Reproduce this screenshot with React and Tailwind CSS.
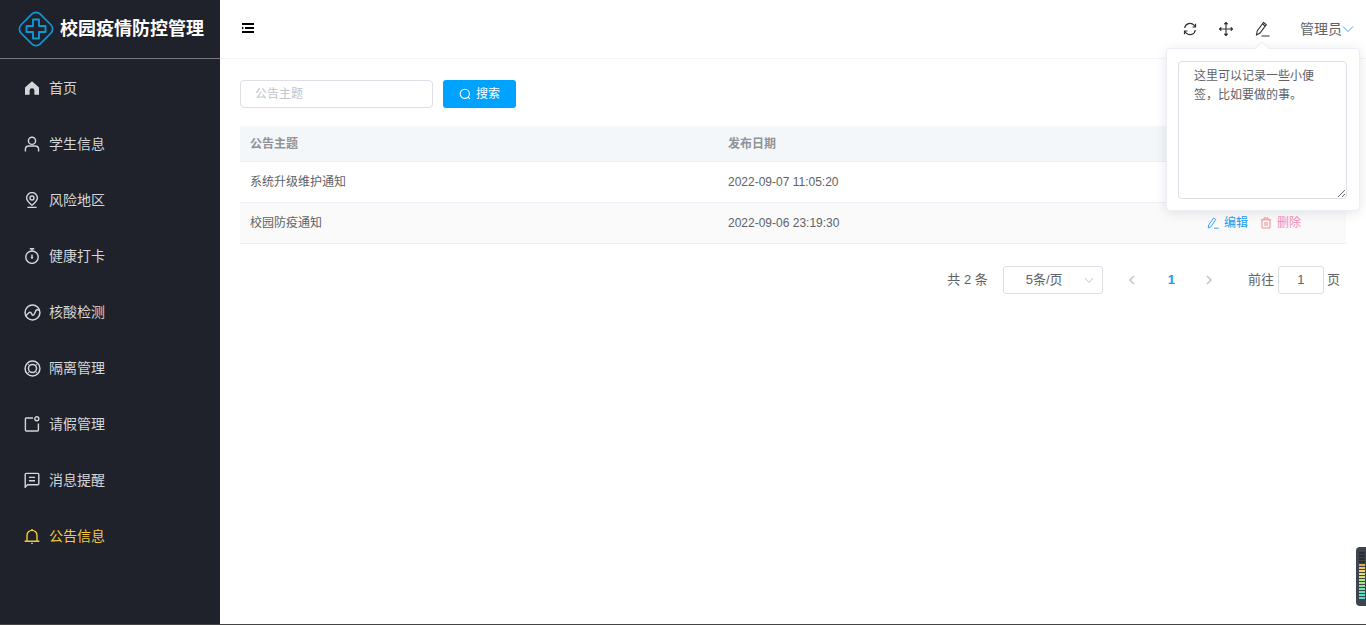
const font = { fontFamily: '"Liberation Sans", "Noto Sans CJK SC", sans-serif' };

const iconProps = { width: 16, height: 16, viewBox: '0 0 16 16', fill: 'none', stroke: 'currentColor', strokeWidth: 1.4 };

const icons = {
  home: (
    <svg width="16" height="16" viewBox="0 0 16 16" fill="currentColor">
      <path d="M8 1.2 15 7.600V14.800H10.400V10.600a2.400 2.400 0 0 0-4.800 0v4.200H1V7.600z" />
    </svg>
  ),
  user: (
    <svg {...iconProps}>
      <circle cx="8" cy="4.800" r="3.600" />
      <path d="M1.400 15.500v-2.100A3.400 3.400 0 0 1 4.800 10h6.400a3.400 3.400 0 0 1 3.400 3.400v2.100" />
    </svg>
  ),
  pin: (
    <svg {...iconProps}>
      <path d="M8 13.200C5 10.800 2.600 8.600 2.600 6a5.400 5.400 0 0 1 10.800 0c0 2.600-2.400 4.800-5.400 7.200z" />
      <circle cx="8" cy="6" r="2" />
      <path d="M3.400 15.400h9.200" />
    </svg>
  ),
  timer: (
    <svg {...iconProps}>
      <circle cx="8" cy="9.200" r="6.200" />
      <path d="M5.800.8h4.400M8 1v2M8 6.400v3.200" />
      <circle cx="8" cy="9.600" r=".5" fill="currentColor" />
    </svg>
  ),
  chart: (
    <svg {...iconProps} width="17" height="17" viewBox="0 0 16 16">
      <circle cx="8" cy="8" r="7" />
      <path d="M1.400 10.800c1.800 0 2.400-3 4.200-3s1.400 2.800 3 2.800c1.800 0 1.600-4.600 3.400-5.200.8-.2 1.800.2 2.800.8" />
    </svg>
  ),
  help: (
    <svg {...iconProps} width="17" height="17" viewBox="0 0 16 16">
      <circle cx="8" cy="8" r="7" />
      <circle cx="8" cy="8" r="3.800" />
      <path d="M5.200 5.200 3 3M10.800 5.200 13 3M5.200 10.800 3 13M10.800 10.800 13 13" strokeWidth=".8" />
    </svg>
  ),
  note: (
    <svg {...iconProps}>
      <path d="M9 2H2.400a1 1 0 0 0-1 1v11a1 1 0 0 0 1 1h11a1 1 0 0 0 1-1V7.400" />
      <circle cx="12.800" cy="2.800" r="2" />
    </svg>
  ),
  message: (
    <svg {...iconProps}>
      <path d="M1.200 15.200V2.400a1 1 0 0 1 1-1h11.600a1 1 0 0 1 1 1v9.400a1 1 0 0 1-1 1H3.600z" />
      <path d="M5 5.400h6M5 8.800h6" />
    </svg>
  ),
  bell: (
    <svg {...iconProps}>
      <path d="M3 13V7.400a5 5 0 0 1 10 0V13" />
      <path d="M.6 13.200h14.800M8 1v1.400" />
      <path d="M7.200 15.400h1.600" />
    </svg>
  ),
};

const menu = [
  ['首页', 'home'],
  ['学生信息', 'user'],
  ['风险地区', 'pin'],
  ['健康打卡', 'timer'],
  ['核酸检测', 'chart'],
  ['隔离管理', 'help'],
  ['请假管理', 'note'],
  ['消息提醒', 'message'],
  ['公告信息', 'bell'],
];

const rows = [
  ['系统升级维护通知', '2022-09-07 11:05:20'],
  ['校园防疫通知', '2022-09-06 23:19:30'],
];

function Logo() {
  return (
    <svg width="38" height="38" viewBox="0 0 38 38" fill="none" stroke="#0e97d6" strokeWidth="1.700">
      <rect x="5.500" y="5.500" width="27" height="27" rx="6" transform="rotate(45 19 19)" />
      <path d="M16 9.500h6V16h6.500v6H22v6.500h-6V22H9.500v-6H16z" strokeWidth="1.900" strokeLinejoin="round" />
    </svg>
  );
}

function Sidebar() {
  return (
    <aside className="w-[220px] shrink-0 bg-[#1f222b] flex flex-col">
      <div className="h-[59px] border-b border-[#75777c] flex items-center pl-[17px] gap-[5px]">
        <Logo />
        <span className="text-[18px] font-bold text-white leading-none">校园疫情防控管理</span>
      </div>
      <nav className="pt-px">
        {menu.map(([label, icon]) => (
          <div
            key={label}
            className={`h-14 flex items-center pl-6 text-[14px] ${label === '公告信息' ? 'text-[#f5c73d]' : 'text-[#d4d6da]'}`}
          >
            <span className="w-[25px] shrink-0">{icons[icon]}</span>
            <span>{label}</span>
          </div>
        ))}
      </nav>
    </aside>
  );
}

function Header() {
  return (
    <header className="h-[59px] shrink-0 border-b border-[#f3f4f6] flex items-center pl-[22px] pr-[12px] relative">
      <svg width="12" height="10" viewBox="0 0 12 10" className="text-black -mt-[2px]" fill="currentColor">
        <path d="M0 0h12v2H0zM3 4h9v2H3zM0 8h12v2H0zM0 3.500 2 5 0 6.500z" />
      </svg>
      <div className="ml-auto flex items-center text-[#303133]">
        <svg width="14" height="14" viewBox="0 0 14 14" fill="none" stroke="currentColor" strokeWidth="1.200">
          <path d="M1.700 6A5.300 5.300 0 0 1 11 3.200L12.300 4.800M12.300 8A5.300 5.300 0 0 1 3 10.800L1.700 9.200" />
          <path d="M12.500 1.800v3.200H9.500M1.500 12.200V9h3" />
        </svg>
        <svg className="ml-[22px]" width="14" height="14" viewBox="0 0 14 14" fill="none" stroke="currentColor" strokeWidth="1.100">
          <path d="M7 .5v13M.5 7h13" />
          <path d="M5.300 2.200 7 .5l1.700 1.700M5.300 11.800 7 13.500l1.700-1.700M2.200 5.300.5 7l1.700 1.700M11.800 5.300 13.500 7l-1.700 1.700" fill="currentColor" />
        </svg>
        <svg className="ml-[22px]" width="15" height="16" viewBox="0 0 15 16" fill="none" stroke="currentColor" strokeWidth="1.100">
          <path d="M1.500 14 2.200 10 8.500 1.500l2.800 2L5 12z" />
          <path d="M7.500 3l2.800 2M6.500 15h8" />
        </svg>
        <span className="ml-[30px] text-[14px] text-[#606266]">管理员</span>
        <svg width="12" height="12" viewBox="0 0 12 12" fill="none" stroke="#409eff" strokeWidth="1">
          <path d="M1 3.500 6 8.500l5-5" />
        </svg>
      </div>

      <div className="absolute left-[946px] top-[48px] w-[194px] h-[163px] bg-white rounded-[4px] border border-[#ebeef5] shadow-[0_2px_12px_rgba(0,0,0,0.1)] pl-[11px] pt-3 z-10">
        <span className="absolute -top-[6px] left-[90px] w-[10px] h-[10px] rotate-45 bg-white border-l border-t border-[#ebeef5]" />
        <textarea
          readOnly
          className="block w-[169px] h-[138px] border border-[#dcdfe6] rounded-[4px] px-[15px] py-[5px] text-[12px] leading-[19px] text-[#606266] outline-none"
          style={font}
          value="这里可以记录一些小便签，比如要做的事。"
        />
      </div>
    </header>
  );
}

function SearchBar() {
  return (
    <div className="flex items-center gap-[10px]">
      <div className="w-[193px] h-[28px] border border-[#dcdfe6] rounded-[4px] pl-[14px] flex items-center text-[12px] text-[#c0c4cc]">
        公告主题
      </div>
      <button className="w-[73px] h-[28px] bg-[#00a2ff] rounded-[3px] text-white text-[12px] flex items-center justify-center gap-[5px]">
        <svg width="12" height="12" viewBox="0 0 12 12" fill="none" stroke="currentColor" strokeWidth="1.100">
          <circle cx="5.800" cy="5.800" r="4.600" />
          <path d="M9.200 9.200 10.800 10.800" />
        </svg>
        搜索
      </button>
    </div>
  );
}

function NoticeTable() {
  return (
    <div className="mt-[18px] text-[12px] text-[#606266]">
      <div className="h-[36px] bg-[#f4f7f9] border-b border-[#ebeef5] flex items-center pl-[10px] font-bold text-[#909399]">
        <span className="w-[478px]">公告主题</span>
        <span>发布日期</span>
      </div>
      {rows.map(([title, date], i) => (
        <div
          key={title}
          className={`h-[41px] border-b border-[#ebeef5] flex items-center pl-[10px] ${i === 1 ? 'bg-[#fafafa]' : 'bg-white'}`}
        >
          <span className="w-[478px]">{title}</span>
          <span>{date}</span>
          <span className="ml-auto mr-[45px] flex items-center">
            <svg width="12" height="12" viewBox="0 0 12 12" fill="none" stroke="#409eff" strokeWidth="1">
              <path d="M1.200 11 1.700 8 6.600 1l2.200 1.500L4 9.600zM7 11.200h4.500" />
            </svg>
            <span className="ml-[5px] text-[#1d9bf0]">编辑</span>
            <svg className="ml-[12px]" width="12" height="12" viewBox="0 0 12 12" fill="none" stroke="#f78989" strokeWidth="1">
              <path d="M1 2.800h10M4 2.800V1h4v1.800M2 2.800V11h8V2.800M5 5v4M7 5v4" />
            </svg>
            <span className="ml-[5px] text-[#f78bb0]">删除</span>
          </span>
        </div>
      ))}
    </div>
  );
}

function Pagination() {
  return (
    <div className="mt-[22px] h-[28px] flex items-center justify-end text-[13px] text-[#606266] pr-[6px]">
      <span>共 2 条</span>
      <div className="ml-[15px] w-[100px] h-[28px] border border-[#dcdfe6] rounded-[3px] flex items-center pl-[22px] pr-[8px]">
        <span>5条/页</span>
        <svg className="ml-auto" width="10" height="10" viewBox="0 0 10 10" fill="none" stroke="#c0c4cc" strokeWidth="1">
          <path d="M1 3l4 4.500L9 3" />
        </svg>
      </div>
      <svg className="ml-[25px]" width="8" height="10" viewBox="0 0 8 10" fill="none" stroke="#c0c4cc" strokeWidth="1.500">
        <path d="M6 1 2 5l4 4" />
      </svg>
      <span className="ml-[32px] font-bold text-[#1d9bf0]">1</span>
      <svg className="ml-[30px]" width="8" height="10" viewBox="0 0 8 10" fill="none" stroke="#c0c4cc" strokeWidth="1.500">
        <path d="M2 1l4 4-4 4" />
      </svg>
      <span className="ml-[35px]">前往</span>
      <div className="ml-[4px] w-[46px] h-[28px] border border-[#dcdfe6] rounded-[3px] flex items-center justify-center">1</div>
      <span className="ml-[3px]">页</span>
    </div>
  );
}

export default function App() {
  return (
    <div className="relative h-[625px] w-[1366px] flex overflow-hidden bg-white border-b border-[#444]" style={font}>
      <Sidebar />
      <main className="flex-1 flex flex-col min-w-0">
        <Header />
        <div className="pt-[21px] pl-5 pr-5">
          <SearchBar />
          <NoticeTable />
          <Pagination />
        </div>
      </main>
      {/* floating widget in the lower right corner */}
      <div className="absolute right-0 top-[547px] w-[10px] h-[59px] bg-[#3f434d] rounded-l-[4px] flex flex-col items-center gap-px pt-[5px] pl-[2px]">
        {['#2a2d34', '#2a2d34', '#2a2d34', '#2a2d34', '#e9a64f', '#eec45c', '#f0d868', '#e8e070', '#d4e278', '#bfe280', '#a6e28c', '#8ee29c', '#76e2ac', '#62e2bc', '#55e0c8', '#50dcd0'].map((c, i) => (
          <span key={i} className="block w-[6px] h-[2px]" style={{ backgroundColor: c }} />
        ))}
      </div>
    </div>
  );
}
